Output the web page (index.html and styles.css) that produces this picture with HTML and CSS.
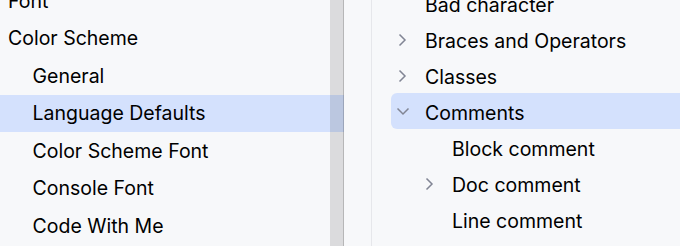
FILE: index.html
```html
<!DOCTYPE html>
<html>
<head>
<meta charset="utf-8">
<link rel="stylesheet" href="styles.css">
</head>
<body>
<div class="app">
  <div class="left">
    <div class="list left-list">
      <div class="lrow lvl0">Font</div>
      <div class="lrow lvl0">Color Scheme</div>
      <div class="lrow lvl1">General</div>
      <div class="lrow lvl1 sel">Language Defaults</div>
      <div class="lrow lvl1">Color Scheme Font</div>
      <div class="lrow lvl1">Console Font</div>
      <div class="lrow lvl1">Code With Me</div>
    </div>
    <div class="scrollbar"></div>
  </div>
  <div class="right">
    <div class="gutter"></div>
    <div class="tree">
      <div class="trow"><span class="chev"></span><span class="label">Bad character</span></div>
      <div class="trow"><span class="chev"><svg width="9" height="14" viewBox="0 0 9 14"><path d="M1.5 1.5 L7 7 L1.5 12.5" fill="none" stroke="#818594" stroke-width="1.5"/></svg></span><span class="label">Braces and Operators</span></div>
      <div class="trow"><span class="chev"><svg width="9" height="14" viewBox="0 0 9 14"><path d="M1.5 1.5 L7 7 L1.5 12.5" fill="none" stroke="#818594" stroke-width="1.5"/></svg></span><span class="label">Classes</span></div>
      <div class="trow sel"><span class="chev"><svg width="14" height="9" viewBox="0 0 14 9"><path d="M1.5 1.5 L7 7 L12.5 1.5" fill="none" stroke="#818594" stroke-width="1.5"/></svg></span><span class="label">Comments</span></div>
      <div class="trow child"><span class="chev"></span><span class="label">Block comment</span></div>
      <div class="trow child"><span class="chev"><svg width="9" height="14" viewBox="0 0 9 14"><path d="M1.5 1.5 L7 7 L1.5 12.5" fill="none" stroke="#818594" stroke-width="1.5"/></svg></span><span class="label">Doc comment</span></div>
      <div class="trow child"><span class="chev"></span><span class="label">Line comment</span></div>
    </div>
  </div>
</div>
</body>
</html>
```
FILE: styles.css
```css
html, body {
  margin: 0;
  padding: 0;
  background: #f7f8fa;
  overflow: hidden;
}
body {
  font-family: "Inter", "Noto Sans", sans-serif;
  font-size: 19.5px;
  color: #000;
}
.app {
  display: flex;
  width: 680px;
  height: 246px;
  overflow: hidden;
}
.left {
  position: relative;
  width: 344px;
  flex: none;
  overflow: hidden;
}
.left-list {
  margin-top: -18px;
}
.lrow {
  height: 37.5px;
  display: flex;
  align-items: center;
  white-space: nowrap;
}
.lrow span, .lrow { line-height: normal; }
.lvl0 { padding-left: 8px; }
.lvl1 { padding-left: 32.5px; }
.lrow.sel { background: #d4e1fd; }
.scrollbar {
  position: absolute;
  top: 0;
  right: 0;
  width: 13px;
  height: 100%;
  background: rgba(0, 0, 0, 0.115);
  border-right: 1px solid rgba(0, 0, 0, 0.17);
}
.right {
  flex: 1;
  display: flex;
  overflow: hidden;
}
.gutter {
  width: 27px;
  flex: none;
  border-right: 1px solid #e6e7eb;
}
.tree {
  flex: 1;
  margin-top: -15px;
  padding-left: 19px;
}
.trow {
  height: 36px;
  display: flex;
  align-items: center;
  white-space: nowrap;
  padding-left: 7px;
  margin-right: -10px;
  border-radius: 6px;
}
.trow.child { padding-left: 34px; }
.trow.sel { background: #d4e1fd; }
.chev {
  width: 27px;
  flex: none;
  display: flex;
  align-items: center;
  margin-top: 1px;
}
.trow.sel .chev svg { margin-left: -2px; }
.label {
  line-height: normal;
  margin-top: 3px;
}
```
